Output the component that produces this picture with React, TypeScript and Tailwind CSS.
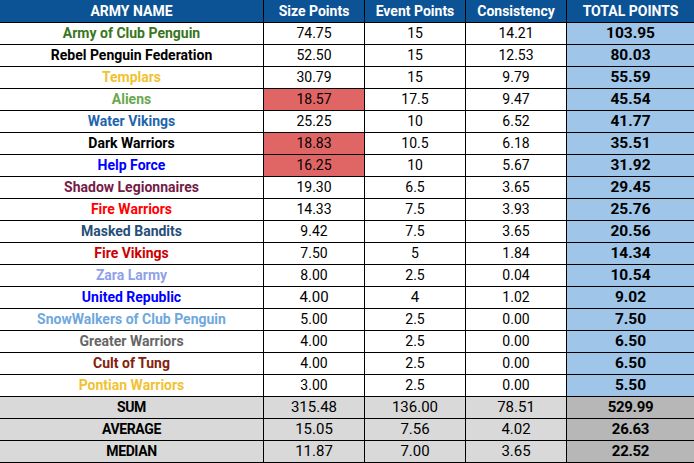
import React from "react";

type Row = {
  name: string;
  color: string;
  size: string;
  event: string;
  cons: string;
  total: string;
  red?: boolean;
  big?: boolean;
};

const rows: Row[] = [
  { name: "Army of Club Penguin", color: "text-[#38761d]", size: "74.75", event: "15", cons: "14.21", total: "103.95" },
  { name: "Rebel Penguin Federation", color: "text-black", size: "52.50", event: "15", cons: "12.53", total: "80.03" },
  { name: "Templars", color: "text-[#f1c232]", size: "30.79", event: "15", cons: "9.79", total: "55.59" },
  { name: "Aliens", color: "text-[#6aa84f]", size: "18.57", event: "17.5", cons: "9.47", total: "45.54", red: true },
  { name: "Water Vikings", color: "text-[#1f65ad]", size: "25.25", event: "10", cons: "6.52", total: "41.77" },
  { name: "Dark Warriors", color: "text-black", size: "18.83", event: "10.5", cons: "6.18", total: "35.51", red: true },
  { name: "Help Force", color: "text-[#0000ff]", size: "16.25", event: "10", cons: "5.67", total: "31.92", red: true },
  { name: "Shadow Legionnaires", color: "text-[#741b47]", size: "19.30", event: "6.5", cons: "3.65", total: "29.45" },
  { name: "Fire Warriors", color: "text-[#ff0000]", size: "14.33", event: "7.5", cons: "3.93", total: "25.76" },
  { name: "Masked Bandits", color: "text-[#264e78]", size: "9.42", event: "7.5", cons: "3.65", total: "20.56" },
  { name: "Fire Vikings", color: "text-[#cc0000]", size: "7.50", event: "5", cons: "1.84", total: "14.34" },
  { name: "Zara Larmy", color: "text-[#8fa2e6]", size: "8.00", event: "2.5", cons: "0.04", total: "10.54" },
  { name: "United Republic", color: "text-[#0000ff]", size: "4.00", event: "4", cons: "1.02", total: "9.02", big: true },
  { name: "SnowWalkers of Club Penguin", color: "text-[#6fa8dc]", size: "5.00", event: "2.5", cons: "0.00", total: "7.50" },
  { name: "Greater Warriors", color: "text-[#666666]", size: "4.00", event: "2.5", cons: "0.00", total: "6.50" },
  { name: "Cult of Tung", color: "text-[#85200c]", size: "4.00", event: "2.5", cons: "0.00", total: "6.50" },
  { name: "Pontian Warriors", color: "text-[#f1c232]", size: "3.00", event: "2.5", cons: "0.00", total: "5.50" },
];

const summary = [
  { label: "SUM", size: "315.48", event: "136.00", cons: "78.51", total: "529.99" },
  { label: "AVERAGE", size: "15.05", event: "7.56", cons: "4.02", total: "26.63" },
  { label: "MEDIAN", size: "11.87", event: "7.00", cons: "3.65", total: "22.52" },
];

const cell = "flex items-center justify-center border-r border-b border-black h-[22px]";
const w1 = "w-[264px]";
const w2 = "w-[101px]";
const w5 = "w-[128px]";

export default function App() {
  return (
    <div className="w-[694px] h-[463px] overflow-hidden bg-white font-['Roboto',sans-serif]">
      <div className="w-[695px]">
        <div className="flex text-white font-bold text-[14px] bg-[#0b5394]">
          <div className={`${cell} ${w1} h-[23px]`}>ARMY NAME</div>
          <div className={`${cell} ${w2} h-[23px]`}>Size Points</div>
          <div className={`${cell} ${w2} h-[23px]`}>Event Points</div>
          <div className={`${cell} ${w2} h-[23px]`}>Consistency</div>
          <div className={`${cell} ${w5} h-[23px]`}>TOTAL POINTS</div>
        </div>
        {rows.map((r) => (
          <div key={r.name} className="flex text-black">
            <div className={`${cell} ${w1} font-bold text-[14px] ${r.color}`}>{r.name}</div>
            <div className={`${cell} ${w2} ${r.big ? "text-[15px]" : "text-[14px]"} ${r.red ? "bg-[#e06666]" : ""}`}>{r.size}</div>
            <div className={`${cell} ${w2} ${r.big ? "text-[15px]" : "text-[14px]"}`}>{r.event}</div>
            <div className={`${cell} ${w2} text-[14px]`}>{r.cons}</div>
            <div className={`${cell} ${w5} bg-[#9fc5e8] font-bold text-[15.5px]`}>{r.total}</div>
          </div>
        ))}
        {summary.map((s) => (
          <div key={s.label} className="flex text-black bg-[#d9d9d9] font-['Liberation_Sans_Narrow','Roboto',sans-serif] text-[15px]">
            <div className={`${cell} ${w1} font-bold text-[14px] tracking-[-0.4px]`}>{s.label}</div>
            <div className={`${cell} ${w2}`}>{s.size}</div>
            <div className={`${cell} ${w2}`}>{s.event}</div>
            <div className={`${cell} ${w2}`}>{s.cons}</div>
            <div className={`${cell} ${w5} bg-[#b7b7b7] font-bold tracking-[-0.3px]`}>{s.total}</div>
          </div>
        ))}
      </div>
    </div>
  );
}
